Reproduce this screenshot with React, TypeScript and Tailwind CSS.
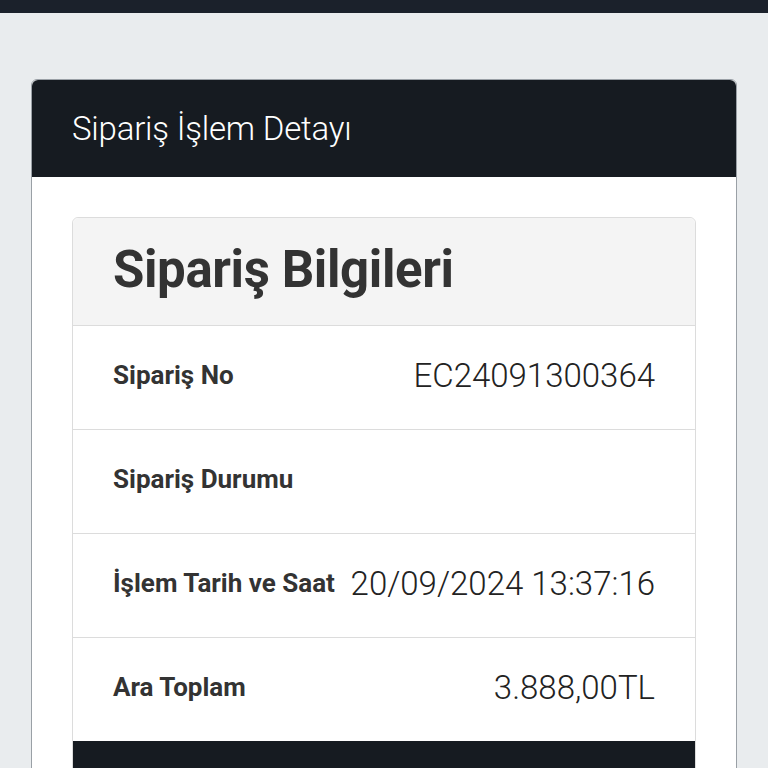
const rows = [
  { label: "Sipariş No", value: "EC24091300364" },
  { label: "Sipariş Durumu", value: "" },
  { label: "İşlem Tarih ve Saat", value: "20/09/2024 13:37:16" },
  { label: "Ara Toplam", value: "3.888,00TL" },
];

export default function App() {
  return (
    <div className="min-h-[768px] bg-[#e9ecee] font-['Roboto',sans-serif] text-[#333]">
      <div className="h-[13px] bg-[#1b212b]" />
      <div className="px-[31px] pt-[66px]">
        <div className="rounded-t-md border border-[#9aa0a6] bg-white">
          <div className="flex h-[97px] items-center rounded-t-md bg-[#161b21] px-[40px]">
            <h1 className="text-[33px] font-light tracking-[-0.2px] text-white">Sipariş İşlem Detayı</h1>
          </div>
          <div className="px-[40px] pt-[40px]">
            <div className="rounded-t-md border border-[#dcdcdc]">
              <div className="flex h-[107px] items-center rounded-t-md bg-[#f4f4f4] px-[40px]">
                <h2 className="pb-[2px] text-[51px] font-bold tracking-[-0.4px] text-[#333]">Sipariş Bilgileri</h2>
              </div>
              {rows.map((r) => (
                <div
                  key={r.label}
                  className="flex h-[104px] items-center justify-between border-t border-[#dcdcdc] px-[40px]"
                >
                  <div className="pb-[4px] text-[26px] font-bold text-[#333]">{r.label}</div>
                  <div className="pb-[4px] text-[33px] font-light text-[#222]">{r.value}</div>
                </div>
              ))}
              <div className="h-[40px] bg-[#161b21]" />
            </div>
          </div>
        </div>
      </div>
    </div>
  );
}
